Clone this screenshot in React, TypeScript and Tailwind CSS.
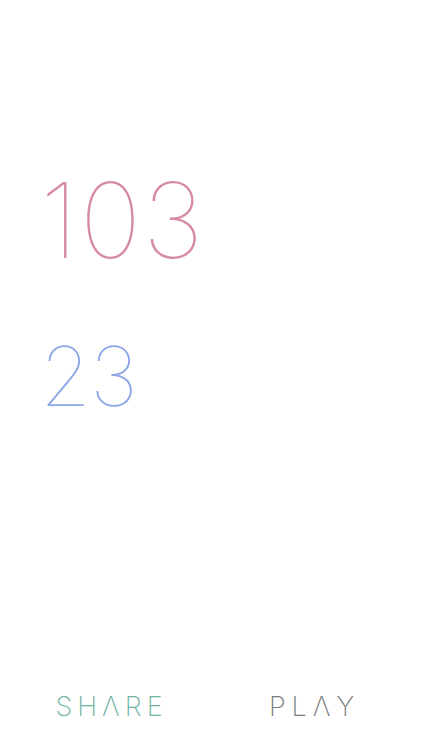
export default function App() {
  return (
    <div
      className="flex h-[750px] w-[422px] flex-col bg-white"
      style={{ fontFamily: "Inter, 'Helvetica Neue', Arial, sans-serif" }}
    >
      <div className="flex flex-1 flex-col pl-[40px] pt-[168px]">
        <div className="text-[104px] font-thin leading-none tracking-[1.5px] text-[#d68aa8]">103</div>
        <div className="mt-[64px] text-[82px] font-thin leading-none tracking-[-1px] text-[#8ea5e6]">23</div>
      </div>
      <div className="grid h-[80px] grid-cols-2 items-start">
        <button className="pl-[12px] pt-[17px] text-center text-[27px] font-extralight tracking-[5px] text-[#6fb3a2]">
          SHΛRE
        </button>
        <button className="pr-[4px] pt-[17px] text-center text-[27px] font-extralight tracking-[6px] text-[#7b7b7b]">
          PLΛY
        </button>
      </div>
    </div>
  );
}
